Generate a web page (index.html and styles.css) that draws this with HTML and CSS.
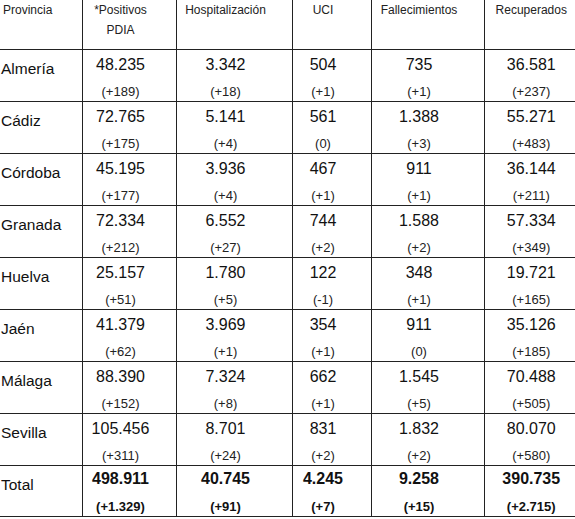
FILE: index.html
```html
<!DOCTYPE html>
<html lang="es">
<head>
    <meta charset="UTF-8">
    <meta name="viewport" content="width=device-width, initial-scale=1.0">
    <title>Datos COVID-19 por provincia - Andalucía</title>
    <link rel="stylesheet" href="styles.css">
</head>
<body>
    <table class="datos">
        <colgroup>
            <col class="c-prov">
            <col class="c-pos">
            <col class="c-hosp">
            <col class="c-uci">
            <col class="c-fall">
            <col class="c-rec">
        </colgroup>
        <thead>
            <tr>
                <th class="prov"><div class="head">Provincia</div></th>
                <th><div class="head">*Positivos<br>PDIA</div></th>
                <th><div class="head">Hospitalización</div></th>
                <th><div class="head">UCI</div></th>
                <th><div class="head">Fallecimientos</div></th>
                <th><div class="head">Recuperados</div></th>
            </tr>
        </thead>
        <tbody>
            <tr>
                <td class="prov"><div class="name">Almería</div></td>
                <td><div class="val">48.235</div><div class="diff">(+189)</div></td>
                <td><div class="val">3.342</div><div class="diff">(+18)</div></td>
                <td><div class="val">504</div><div class="diff">(+1)</div></td>
                <td><div class="val">735</div><div class="diff">(+1)</div></td>
                <td><div class="val">36.581</div><div class="diff">(+237)</div></td>
            </tr>
            <tr>
                <td class="prov"><div class="name">Cádiz</div></td>
                <td><div class="val">72.765</div><div class="diff">(+175)</div></td>
                <td><div class="val">5.141</div><div class="diff">(+4)</div></td>
                <td><div class="val">561</div><div class="diff">(0)</div></td>
                <td><div class="val">1.388</div><div class="diff">(+3)</div></td>
                <td><div class="val">55.271</div><div class="diff">(+483)</div></td>
            </tr>
            <tr>
                <td class="prov"><div class="name">Córdoba</div></td>
                <td><div class="val">45.195</div><div class="diff">(+177)</div></td>
                <td><div class="val">3.936</div><div class="diff">(+4)</div></td>
                <td><div class="val">467</div><div class="diff">(+1)</div></td>
                <td><div class="val">911</div><div class="diff">(+1)</div></td>
                <td><div class="val">36.144</div><div class="diff">(+211)</div></td>
            </tr>
            <tr>
                <td class="prov"><div class="name">Granada</div></td>
                <td><div class="val">72.334</div><div class="diff">(+212)</div></td>
                <td><div class="val">6.552</div><div class="diff">(+27)</div></td>
                <td><div class="val">744</div><div class="diff">(+2)</div></td>
                <td><div class="val">1.588</div><div class="diff">(+2)</div></td>
                <td><div class="val">57.334</div><div class="diff">(+349)</div></td>
            </tr>
            <tr>
                <td class="prov"><div class="name">Huelva</div></td>
                <td><div class="val">25.157</div><div class="diff">(+51)</div></td>
                <td><div class="val">1.780</div><div class="diff">(+5)</div></td>
                <td><div class="val">122</div><div class="diff">(-1)</div></td>
                <td><div class="val">348</div><div class="diff">(+1)</div></td>
                <td><div class="val">19.721</div><div class="diff">(+165)</div></td>
            </tr>
            <tr>
                <td class="prov"><div class="name">Jaén</div></td>
                <td><div class="val">41.379</div><div class="diff">(+62)</div></td>
                <td><div class="val">3.969</div><div class="diff">(+1)</div></td>
                <td><div class="val">354</div><div class="diff">(+1)</div></td>
                <td><div class="val">911</div><div class="diff">(0)</div></td>
                <td><div class="val">35.126</div><div class="diff">(+185)</div></td>
            </tr>
            <tr>
                <td class="prov"><div class="name">Málaga</div></td>
                <td><div class="val">88.390</div><div class="diff">(+152)</div></td>
                <td><div class="val">7.324</div><div class="diff">(+8)</div></td>
                <td><div class="val">662</div><div class="diff">(+1)</div></td>
                <td><div class="val">1.545</div><div class="diff">(+5)</div></td>
                <td><div class="val">70.488</div><div class="diff">(+505)</div></td>
            </tr>
            <tr>
                <td class="prov"><div class="name">Sevilla</div></td>
                <td><div class="val">105.456</div><div class="diff">(+311)</div></td>
                <td><div class="val">8.701</div><div class="diff">(+24)</div></td>
                <td><div class="val">831</div><div class="diff">(+2)</div></td>
                <td><div class="val">1.832</div><div class="diff">(+2)</div></td>
                <td><div class="val">80.070</div><div class="diff">(+580)</div></td>
            </tr>
            <tr class="total">
                <td class="prov"><div class="name">Total</div></td>
                <td><div class="val">498.911</div><div class="diff">(+1.329)</div></td>
                <td><div class="val">40.745</div><div class="diff">(+91)</div></td>
                <td><div class="val">4.245</div><div class="diff">(+7)</div></td>
                <td><div class="val">9.258</div><div class="diff">(+15)</div></td>
                <td><div class="val">390.735</div><div class="diff">(+2.715)</div></td>
            </tr>
        </tbody>
    </table>
</body>
</html>
```

FILE: styles.css
```css
body {
    margin: 0;
    padding: 0;
    background-color: #fff;
    font-family: "Liberation Sans", Arial, sans-serif;
    color: #111;
    overflow: hidden;
}

.datos {
    border-collapse: collapse;
    table-layout: fixed;
    width: 595px;
}

.c-prov { width: 82px; }
.c-pos  { width: 94px; }
.c-hosp { width: 116px; }
.c-uci  { width: 79px; }
.c-fall { width: 113px; }
.c-rec  { width: 111px; }

th, td {
    padding: 0;
    vertical-align: top;
    text-align: center;
    border-right: 1px solid #222;
    border-bottom: 1px solid #222;
}

th:last-child, td:last-child {
    border-right: none;
}

th {
    font-weight: normal;
}

.head {
    height: 49px;
    font-size: 12px;
    line-height: 20px;
    color: #222;
    padding-right: 17px;
}

th.prov .head {
    text-align: left;
    padding: 0 0 0 3px;
}

.name {
    height: 42px;
    padding: 9px 0 0 1px;
    text-align: left;
    font-size: 15.5px;
    line-height: 20px;
}

.val {
    padding: 3px 17px 0 0;
    font-size: 16px;
    line-height: 24px;
}

.diff {
    margin-top: 6px;
    padding-right: 17px;
    font-size: 13px;
    line-height: 18px;
    color: #222;
}

.total td {
    height: 50px;
}

.total .name {
    height: 41px;
}

.total .val,
.total .diff {
    font-weight: bold;
    color: #111;
}

.total .val {
    padding-top: 1px;
}

.total .diff {
    margin-top: 7px;
}
```
